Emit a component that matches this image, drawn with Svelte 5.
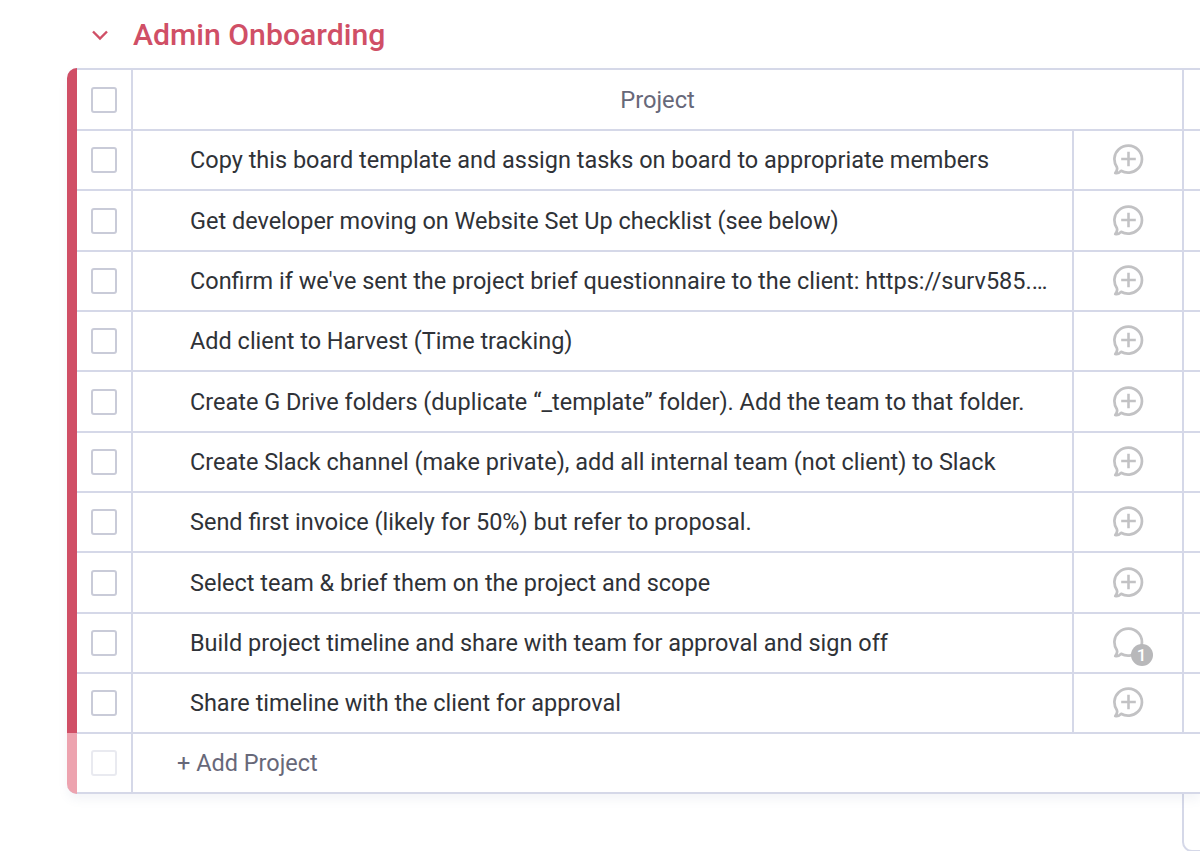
<script>
    const tasks = [
        { name: "Copy this board template and assign tasks on board to appropriate members" },
        { name: "Get developer moving on Website Set Up checklist (see below)" },
        { name: "Confirm if we've sent the project brief questionnaire to the client: https://surv585.…" },
        { name: "Add client to Harvest (Time tracking)" },
        { name: "Create G Drive folders (duplicate “_template” folder). Add the team to that folder." },
        { name: "Create Slack channel (make private), add all internal team (not client) to Slack" },
        { name: "Send first invoice (likely for 50%) but refer to proposal." },
        { name: "Select team & brief them on the project and scope" },
        { name: "Build project timeline and share with team for approval and sign off", updates: 1 },
        { name: "Share timeline with the client for approval" }
    ];
</script>

<div class="page">
    <div class="group-title">
        <svg class="chevron" width="18" height="12" viewBox="0 0 18 12">
            <path d="M2 2.5 L9 9.5 L16 2.5" fill="none" stroke="#d04f66" stroke-width="2.4" />
        </svg>
        <h2>Admin Onboarding</h2>
    </div>

    <div class="board">
        <div class="row header">
            <div class="check-cell"><span class="box"></span></div>
            <div class="head-name">Project</div>
            <div class="tail"></div>
        </div>

        {#each tasks as task}
            <div class="row">
                <div class="check-cell"><span class="box"></span></div>
                <div class="name">{task.name}</div>
                <div class="updates">
                    <span class="bubble">
                        <svg width="31" height="31" viewBox="0 0 34 34">
                            <path d="M2.5 31.8 C4.4 29.4 5 27.6 4.3 25.6 C0 19 .8 10.8 6.4 5.8 C12.6 .4 21.8 .6 27.6 6.4 C33.4 12.4 33 21.6 27.2 27.2 C21.8 32.2 14.4 32.6 8.8 29.4 C7 31.4 4.8 32.4 2.5 31.8 Z"
                                fill="none" stroke="#c2c2c4" stroke-width="3" stroke-linejoin="round" />
                            {#if !task.updates}
                                <path d="M17 8.5 V24.5 M9 16.5 H25" stroke="#c2c2c4" stroke-width="2.8" />
                            {/if}
                        </svg>
                        {#if task.updates}
                            <span class="count">{task.updates}</span>
                        {/if}
                    </span>
                </div>
                <div class="tail"></div>
            </div>
        {/each}

        <div class="row add">
            <div class="check-cell"><span class="box faded"></span></div>
            <div class="add-name">+ Add Project</div>
        </div>
    </div>

    <div class="below">
        <div class="below-cell"></div>
    </div>
</div>

<style>
    :global(body) {
        margin: 0;
        background: #fff;
    }

    .page {
        width: 1200px;
        height: 851px;
        overflow: hidden;
        font-family: Roboto, "Liberation Sans", sans-serif;
        color: #2f3237;
    }

    .group-title {
        display: flex;
        align-items: center;
        height: 68px;
        padding-left: 91px;
        box-sizing: border-box;
        padding-top: 1px;
    }

    .chevron {
        margin-right: 24px;
    }

    h2 {
        margin: 0;
        font-size: 30.2px;
        font-weight: 500;
        color: #d04f66;
    }

    .board {
        position: relative;
        margin-left: 67px;
        width: 1133px;
        border-top: 2px solid #d5d8e8;
        border-bottom: 2px solid #d5d8e8;
        border-radius: 10px 0 0 10px;
        box-shadow: 0 6px 10px rgba(120, 125, 160, 0.08);
        box-sizing: border-box;
        background: #fff;
    }

    .board::before {
        content: "";
        position: absolute;
        left: 0;
        top: -2px;
        bottom: -2px;
        width: 10px;
        border-radius: 10px 0 0 10px;
        background: linear-gradient(to bottom, #d04f66 0, #d04f66 665px, #eda3af 665px);
    }

    .row {
        display: grid;
        grid-template-columns: 56px 941px 110px 1fr;
        height: 60.35px;
        padding-left: 10px;
        box-sizing: border-box;
        border-bottom: 2px solid #d5d8e8;
    }

    .row.header {
        height: 61px;
        grid-template-columns: 56px 1051px 1fr;
    }

    .row.add {
        grid-template-columns: 56px 1fr;
        border-bottom: none;
        height: 57.5px;
    }

    .check-cell {
        display: flex;
        align-items: center;
        justify-content: center;
        border-right: 2px solid #d5d8e8;
    }

    .box {
        width: 26px;
        height: 26px;
        box-sizing: border-box;
        border: 2px solid #c9cbd8;
        border-radius: 3px;
    }

    .box.faded {
        border-color: #e9eaf0;
    }

    .head-name {
        display: flex;
        align-items: center;
        justify-content: center;
        font-size: 23.7px;
        color: #676879;
        border-right: 2px solid #d5d8e8;
    }

    .name {
        display: flex;
        align-items: center;
        padding-left: 57px;
        font-size: 23.47px;
        white-space: nowrap;
        border-right: 2px solid #d5d8e8;
    }

    .add-name {
        display: flex;
        align-items: center;
        padding-left: 44px;
        font-size: 23.47px;
        color: #676879;
    }

    .updates {
        display: flex;
        align-items: center;
        justify-content: center;
        border-right: 2px solid #d5d8e8;
    }

    .bubble {
        position: relative;
        display: block;
        width: 31px;
        height: 31px;
        margin-top: -1px;
    }

    .bubble svg {
        display: block;
    }

    .count {
        position: absolute;
        right: -9px;
        bottom: -8px;
        width: 22px;
        height: 22px;
        border-radius: 50%;
        background: #b8b8ba;
        color: #fff;
        font-size: 17px;
        font-weight: 500;
        line-height: 22px;
        text-align: center;
    }

    .below {
        display: flex;
        justify-content: flex-end;
    }

    .below-cell {
        width: 18px;
        height: 58px;
        box-sizing: border-box;
        border-left: 2px solid #d5d8e8;
        border-bottom: 2px solid #d5d8e8;
        border-bottom-left-radius: 10px;
    }
</style>
